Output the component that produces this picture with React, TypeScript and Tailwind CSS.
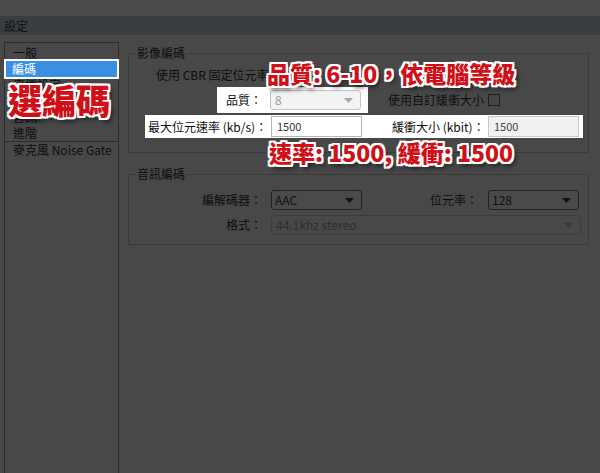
import React from "react";

const FONT = { fontFamily: '"Noto Sans CJK TC", "Noto Sans", sans-serif' };

const OUTLINE =
  "[text-shadow:2px_0_0_#fff,-2px_0_0_#fff,0_2px_0_#fff,0_-2px_0_#fff,2px_2px_0_#fff,-2px_-2px_0_#fff,2px_-2px_0_#fff,-2px_2px_0_#fff,3px_4px_5px_rgba(0,0,0,0.7)]";

function Arrow({ color }: { color: string }) {
  return (
    <svg width="9" height="5" viewBox="0 0 9 5" className="shrink-0">
      <path d="M0 0 L9 0 L4.5 5 Z" fill={color} />
    </svg>
  );
}

function DarkCombo({ value, w }: { value: string; w: string }) {
  return (
    <div
      className={`${w} h-[20px] rounded-[3px] border border-[#222] bg-[#4a4a4a] flex items-center justify-between pl-[3px] pr-[7px] text-[12px] text-[#111]`}
    >
      <span>{value}</span>
      <Arrow color="#111" />
    </div>
  );
}

export default function App() {
  const items = ["一般", "編碼", "串播設定", "影像", "音訊", "進階"];
  return (
    <div
      className="w-[600px] h-[473px] bg-[#484848] overflow-hidden relative flex flex-col text-[12px] text-[#0d0d0d]"
      style={FONT}
    >
      <div className="h-[16px] bg-[#4b4b4b] shrink-0" />
      <div className="h-[19px] bg-[#383d42] shrink-0 flex items-center pl-[4px] text-[12px] text-[#111]">
        設定
      </div>
      <div className="flex flex-1">
        {/* left list */}
        <div className="ml-[4px] mt-[7px] w-[115px] border border-b-0 border-[#2c2c2c] pt-[2px] flex flex-col">
          {items.map((it, i) =>
            i === 1 ? (
              <div key={it} className="h-[16px] relative">
                <div className="absolute left-[-1px] right-[-1px] top-[-2px] bottom-[-2px] border-2 border-white bg-[#3b8fe3] text-white pl-[6px] flex items-center leading-none">
                  {it}
                </div>
              </div>
            ) : (
              <div key={it} className="h-[16px] pl-[8px] flex items-center leading-none">
                {it}
              </div>
            )
          )}
          <div className="h-px bg-[#2c2c2c]" />
          <div className="h-[16px] pl-[8px] flex items-center leading-none">
            麥克風 Noise Gate
          </div>
        </div>

        {/* right side */}
        <div className="ml-[9px] w-[461px] flex flex-col pt-[18px]">
          {/* video group */}
          <div className="relative border border-[#3b3b3b] pt-[13px] pb-[14px]">
            <span className="absolute left-[7px] top-[-9px] px-[1px] bg-[#484848] leading-none py-[2px]">
              影像編碼
            </span>
            <div className="h-[16px] pl-[27px] flex items-center">使用 CBR 固定位元率</div>
            <div className="mt-[4px] flex items-center h-[26px]">
              <div className="ml-[88px] w-[151px] h-[26px] bg-white flex items-center justify-end pr-[7px]">
                <span className="mr-[8px]">品質：</span>
                <div className="w-[91px] h-[20px] rounded-[3px] border border-[#c4c4c4] bg-[#f3f3f3] flex items-center justify-between pl-[4px] pr-[7px] text-[#9a9a9a]">
                  <span>8</span>
                  <Arrow color="#a8a8a8" />
                </div>
              </div>
              <span className="ml-[20px]">使用自訂緩衝大小</span>
              <div className="ml-[4px] w-[12px] h-[12px] border border-[#1e1e1e] bg-[#454545]" />
            </div>
            <div className="mt-[2px] ml-[16px] w-[438px] h-[23px] bg-white flex items-center">
              <span className="w-[126px] pl-[3px]">最大位元速率 (kb/s)：</span>
              <div className="w-[91px] h-[21px] border border-[#b5b5b5] bg-white flex items-center pl-[5px] text-[11px] text-[#333]">
                1500
              </div>
              <span className="ml-[30px] w-[96px]">緩衝大小 (kbit)：</span>
              <div className="w-[91px] h-[21px] border border-[#c8c8c8] bg-[#f1f1f1] flex items-center pl-[5px] text-[11px] text-[#444]">
                1500
              </div>
            </div>
          </div>

          {/* audio group */}
          <div className="relative mt-[21px] border border-[#3b3b3b] pt-[15px] pb-[9px]">
            <span className="absolute left-[7px] top-[-9px] px-[1px] bg-[#484848] leading-none py-[2px]">
              音訊編碼
            </span>
            <div className="flex items-center h-[20px]">
              <span className="w-[133px] text-right">編解碼器：</span>
              <div className="ml-[9px]">
                <DarkCombo value="AAC" w="w-[91px]" />
              </div>
              <span className="w-[116px] text-right">位元率：</span>
              <div className="ml-[10px]">
                <DarkCombo value="128" w="w-[91px]" />
              </div>
            </div>
            <div className="mt-[5px] flex items-center h-[20px]">
              <span className="w-[133px] text-right">格式：</span>
              <div className="ml-[9px] w-[310px] h-[20px] rounded-[3px] border border-[#3c3c3c] bg-[#484848] flex items-center justify-between pl-[4px] pr-[7px] text-[#2e2e2e]">
                <span>44.1khz stereo</span>
                <Arrow color="#3a3a3a" />
              </div>
            </div>
          </div>
        </div>
      </div>

      {/* annotation overlays */}
      <div
        className={`absolute left-[8px] top-[83px] text-[34px] font-black leading-none text-[#cf1018] tracking-[0px] ${OUTLINE}`}
      >
        選編碼
      </div>
      <div
        className={`absolute left-[267px] top-[62px] text-[23px] font-black leading-none text-[#cf1018] whitespace-nowrap ${OUTLINE}`}
      >
        品質: 6-10，依電腦等級
      </div>
      <div
        className={`absolute left-[269px] top-[141px] text-[23px] font-black leading-none text-[#cf1018] whitespace-nowrap ${OUTLINE}`}
      >
        速率: 1500, 緩衝: 1500
      </div>
    </div>
  );
}
